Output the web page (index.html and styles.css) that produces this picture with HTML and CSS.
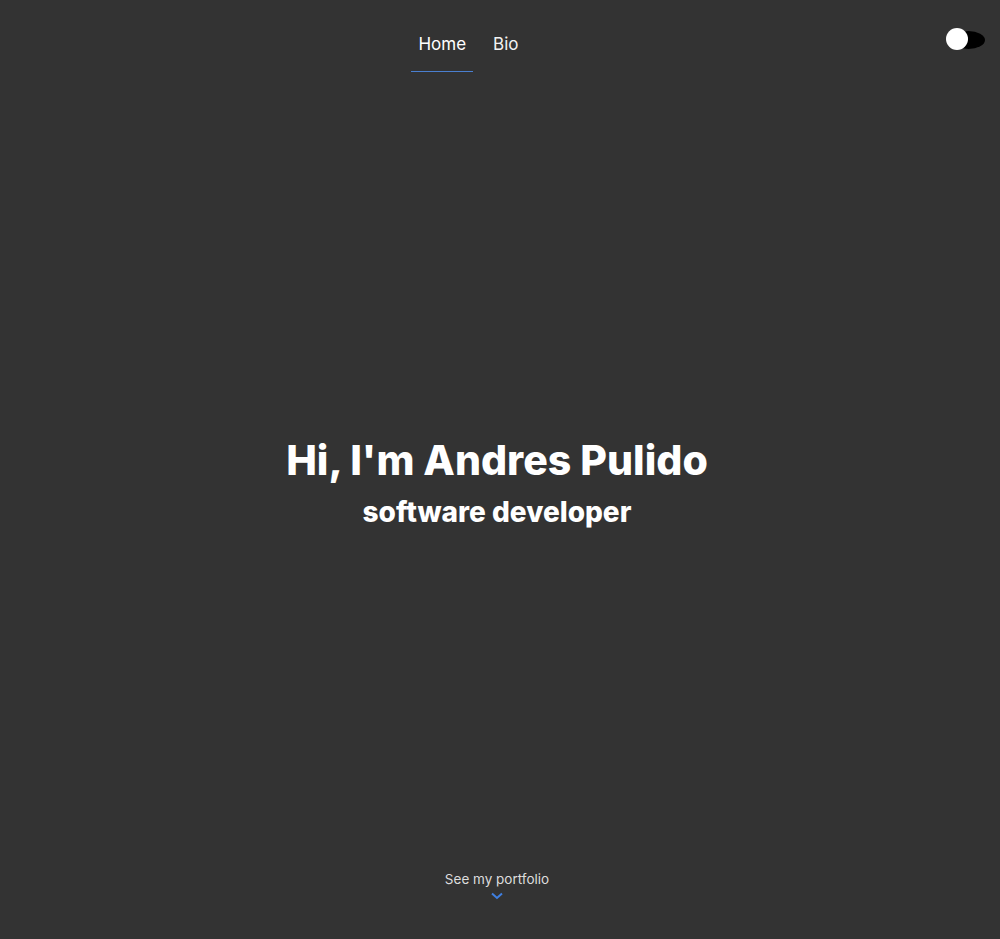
FILE: index.html
```html
<!DOCTYPE html>
<html lang="en">
<head>
<meta charset="utf-8">
<title>Andres Pulido</title>
<link rel="stylesheet" href="styles.css">
</head>
<body>
<div class="page">
  <header class="header">
    <nav class="nav">
      <a class="nav-link active" href="#">Home</a>
      <a class="nav-link" href="#">Bio</a>
    </nav>
    <div class="toggle-wrap">
      <div class="toggle"><span class="knob"></span></div>
    </div>
  </header>
  <main class="hero">
    <h1 class="title">Hi, I'm Andres Pulido</h1>
    <h2 class="subtitle">software developer</h2>
  </main>
  <footer class="more">
    <span class="more-text">See my portfolio</span>
    <svg class="chevron" width="12" height="8" viewBox="0 0 12 8"><path d="M1 1.5 L6 6 L11 1.5" fill="none" stroke="#3f7fe0" stroke-width="2"/></svg>
  </footer>
</div>
</body>
</html>
```
FILE: styles.css
```css
* { box-sizing: border-box; }
html, body { margin: 0; padding: 0; }
body {
  background: #333333;
  color: #ffffff;
  font-family: "Inter", "Open Sans", sans-serif;
}
.page {
  height: 939px;
  display: flex;
  flex-direction: column;
}
.header {
  display: flex;
  height: 72px;
}
.nav {
  flex: 1;
  display: flex;
  justify-content: center;
  gap: 13px;
}
.nav-link {
  color: #f2f2f2;
  text-decoration: none;
  font-size: 17px;
  padding: 16px 7px 0;
  display: flex;
  align-items: center;
  height: 72px;
  border-bottom: 1px solid transparent;
}
.nav-link.active {
  color: #ffffff;
  border-bottom-color: #4a7fd0;
}
.toggle-wrap {
  width: 63px;
  padding: 28px 0 0 9px;
}
.toggle {
  position: relative;
  width: 39px;
  height: 22px;
}
.toggle::before {
  content: "";
  position: absolute;
  left: 6px;
  top: 3px;
  width: 33px;
  height: 18px;
  border-radius: 50%;
  background: #000;
}
.knob {
  position: absolute;
  left: 0;
  top: 0;
  width: 22px;
  height: 22px;
  border-radius: 50%;
  background: #fff;
}
.hero {
  flex: 1;
  display: flex;
  flex-direction: column;
  align-items: center;
  justify-content: center;
  padding: 24px 6px 0 0;
}
.title {
  margin: 0;
  font-size: 41px;
  font-weight: 800;
  line-height: 1.2;
}
.subtitle {
  margin: 0;
  font-size: 28px;
  font-weight: 800;
  line-height: 1.3;
  margin-top: 9px;
}
.more {
  display: flex;
  flex-direction: column;
  align-items: center;
  padding: 0 6px 39px 0;
  gap: 5px;
}
.more-text {
  font-size: 13.5px;
  color: #dddddd;
}
```
